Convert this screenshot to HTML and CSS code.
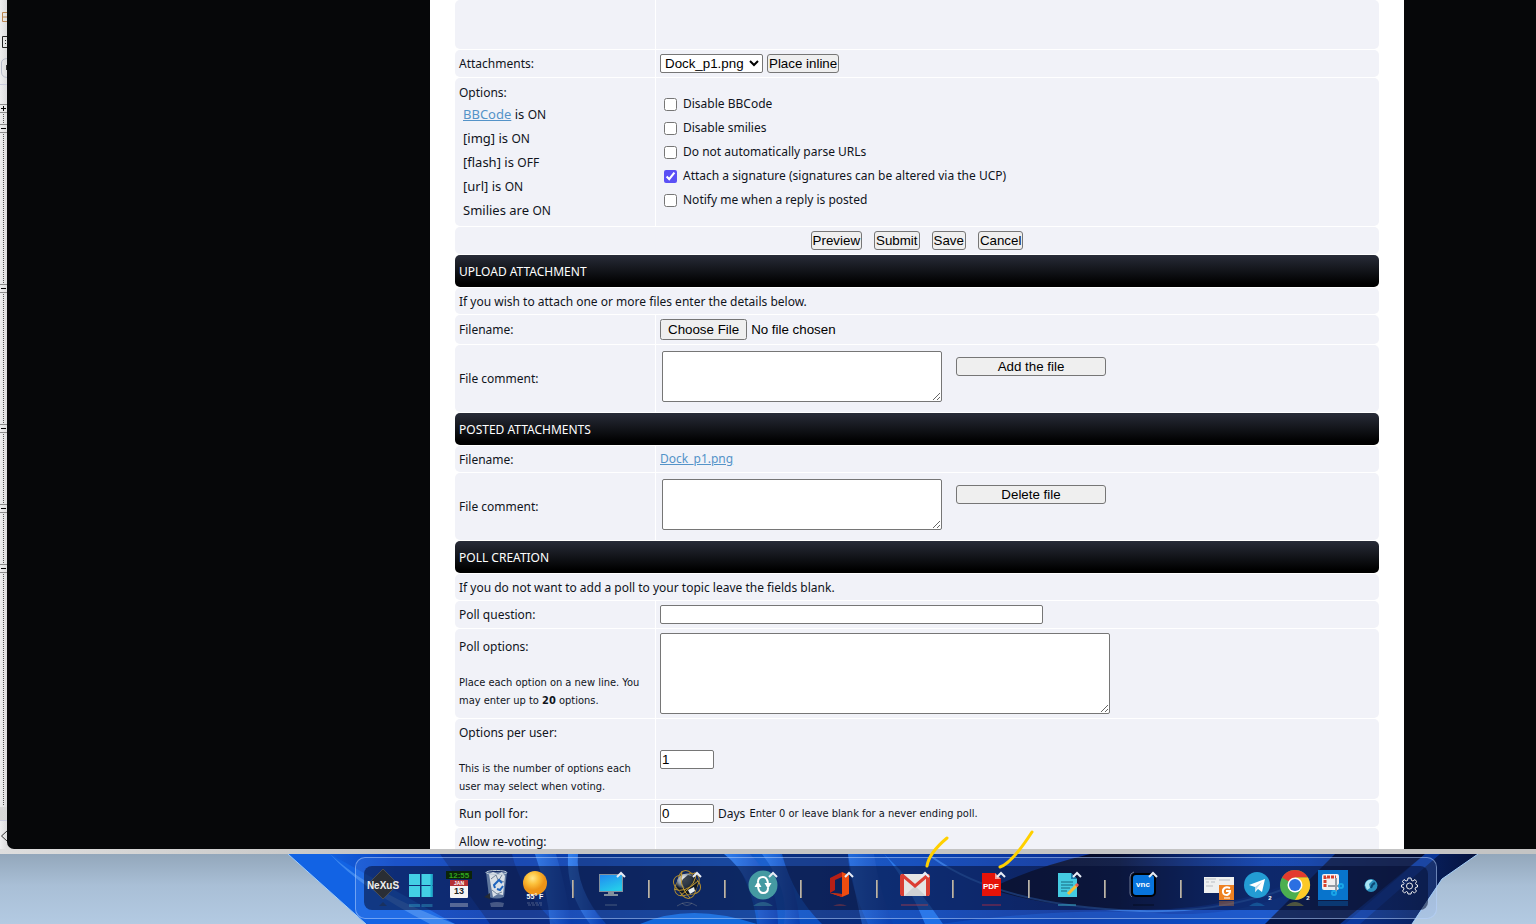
FILE: index.html
```
<!DOCTYPE html>
<html lang="en">
<head>
    <meta charset="UTF-8">
    <meta name="viewport" content="width=device-width, initial-scale=1.0">
    <title>Post a reply</title>
    <link rel="stylesheet" href="styles.css">
</head>
<body>
    <div class="windows">
        <aside class="tree">
            <svg viewBox="0 0 7 854" width="7" height="854" aria-hidden="true">
                <path d="M7 12.500H2.500V21.500H7M3 17H7" fill="none" stroke="#b98550"/>
                <path d="M7 36.500H2.500V47.500H7" fill="none" stroke="#222"/>
                <path d="M5 40h1v1H5zM5 43h1v1H5z" fill="#222"/>
                <path d="M7 58.500Q1.500 59 1.500 63V72Q1.500 77 7 77.500" fill="none" stroke="#b9bccb"/>
                <path d="M6 65h1v5H6z" fill="#333"/>
                <path d="M0 84.500H7M0 820.500H7" stroke="#c9cbdc"/>
                <path d="M3.500 114V124M3.500 134V284M3.500 294V424M3.500 434V504M3.500 514V564M3.500 574V806" stroke="#555" stroke-dasharray="1 1"/>
                <path d="M0 104.500H7M0 112.500H7M0 124.500H7M0 132.500H7M0 284.500H7M0 292.500H7M0 424.500H7M0 432.500H7M0 504.500H7M0 512.500H7M0 564.500H7M0 572.500H7" stroke="#888"/>
                <path d="M1 108.500H6M3.500 106V111M1 128.500H6M1 288.500H6M1 428.500H6M1 508.500H6M1 568.500H6" stroke="#000"/>
                <path d="M0 807H7V820H0z" fill="#d8d8d8"/>
                <path d="M7 831L1.500 836L7 841" fill="none" stroke="#333"/>
            </svg>
        </aside>
        <main class="browser">
            <form class="page" onsubmit="return false">
                <div class="row top"><div></div><div></div></div>
                <div class="row">
                    <div><label for="attach">Attachments:</label></div>
                    <div class="inline">
                        <select id="attach"><option>Dock_p1.png</option></select>
                        <button type="button">Place inline</button>
                    </div>
                </div>
                <div class="row options">
                    <div>
                        Options:
                        <ul>
                            <li><a href="#">BBCode</a> is <small>ON</small></li>
                            <li>[img] is <small>ON</small></li>
                            <li>[flash] is <small>OFF</small></li>
                            <li>[url] is <small>ON</small></li>
                            <li>Smilies are <small>ON</small></li>
                        </ul>
                    </div>
                    <div class="checks">
                        <label><input type="checkbox">Disable BBCode</label>
                        <label><input type="checkbox">Disable smilies</label>
                        <label><input type="checkbox">Do not automatically parse URLs</label>
                        <label><input type="checkbox" checked>Attach a signature (signatures can be altered via the UCP)</label>
                        <label><input type="checkbox">Notify me when a reply is posted</label>
                    </div>
                </div>
                <div class="buttons">
                    <button type="button">Preview</button>
                    <button type="submit">Submit</button>
                    <button type="button">Save</button>
                    <button type="button">Cancel</button>
                </div>

                <h2>UPLOAD ATTACHMENT</h2>
                <p class="note">If you wish to attach one or more files enter the details below.</p>
                <div class="row file">
                    <div><label for="upload">Filename:</label></div>
                    <div><input type="file" id="upload"></div>
                </div>
                <div class="row comment">
                    <div><label for="comment1">File comment:</label></div>
                    <div>
                        <textarea id="comment1"></textarea>
                        <button type="button" class="wide">Add the file</button>
                    </div>
                </div>

                <h2>POSTED ATTACHMENTS</h2>
                <div class="row short">
                    <div>Filename:</div>
                    <div><a href="#">Dock_p1.png</a></div>
                </div>
                <div class="row comment">
                    <div><label for="comment2">File comment:</label></div>
                    <div>
                        <textarea id="comment2"></textarea>
                        <button type="button" class="wide">Delete file</button>
                    </div>
                </div>

                <h2>POLL CREATION</h2>
                <p class="note">If you do not want to add a poll to your topic leave the fields blank.</p>
                <div class="row">
                    <div><label for="question">Poll question:</label></div>
                    <div><input type="text" id="question" class="question"></div>
                </div>
                <div class="row poll">
                    <div>
                        <label for="polloptions">Poll options:</label>
                        <p class="hint">Place each option on a new line. You may enter up to <b>20</b> options.</p>
                    </div>
                    <div><textarea id="polloptions" class="polltext"></textarea></div>
                </div>
                <div class="row peruser">
                    <div>
                        <label for="maxoptions">Options per user:</label>
                        <p class="hint">This is the number of options each user may select when voting.</p>
                    </div>
                    <div><input type="text" id="maxoptions" class="number" value="1"></div>
                </div>
                <div class="row">
                    <div><label for="days">Run poll for:</label></div>
                    <div class="inline"><input type="text" id="days" class="number" value="0"> Days <span class="hint">Enter 0 or leave blank for a never ending poll.</span></div>
                </div>
                <div class="row">
                    <div>Allow re-voting:</div>
                    <div></div>
                </div>
            </form>
        </main>
    </div>

    <footer class="desktop">
        <svg class="wallpaper" viewBox="0 0 1536 70" preserveAspectRatio="none" aria-hidden="true">
            <defs>
                <linearGradient id="sky" x1="0" y1="0" x2="0" y2="1"><stop offset="0" stop-color="#93a7bb"/><stop offset=".45" stop-color="#a9bfd6"/><stop offset="1" stop-color="#b3cae2"/></linearGradient>
                <linearGradient id="bloom" x1="0" x2="1"><stop offset="0" stop-color="#1a72ec"/><stop offset=".09" stop-color="#0b45c4"/><stop offset=".2" stop-color="#0a3aa8"/><stop offset=".4" stop-color="#0b55c8"/><stop offset=".53" stop-color="#0842b4"/><stop offset=".66" stop-color="#0a2f94"/><stop offset=".82" stop-color="#0a43bb"/><stop offset="1" stop-color="#06133e"/></linearGradient>
                <linearGradient id="streak" x1="0" y1="0" x2="1" y2="0"><stop offset="0" stop-color="#2f7ff0"/><stop offset="1" stop-color="#0a3cae"/></linearGradient>
                <linearGradient id="shade" x1="0" y1="0" x2="1" y2="0"><stop offset="0" stop-color="#02041a"/><stop offset=".4" stop-color="#030722" stop-opacity=".9"/><stop offset="1" stop-color="#06206c" stop-opacity="0"/></linearGradient>
            </defs>
            <rect width="1536" height="70" fill="url(#sky)"/>
            <path d="M288 0H1478L1442 25L1427 47L1412 70H366Z" fill="url(#bloom)"/>
            <path d="M288 0H330L455 70H366Z" fill="#1263e4"/>
            <path d="M330 0Q370 38 455 70H430Q360 34 330 0Z" fill="#58a0f6" opacity=".6"/>
            <path d="M440 0L490 70H556Q520 36 512 0Z" fill="#081b62" opacity=".5"/>
            <path d="M535 0Q548 38 550 70H572Q565 30 556 0Z" fill="url(#streak)" opacity=".8"/>
            <path d="M578 0Q575 32 604 70H590Q566 40 568 0Z" fill="url(#streak)"/>
            <path d="M578 0H730Q752 30 757 70H606Q575 35 578 0Z" fill="#06205f" opacity=".5"/>
            <path d="M640 70Q690 48 757 70Z" fill="#1477f0" opacity=".8"/>
            <path d="M724 0Q753 22 760 70H778Q778 28 750 0Z" fill="url(#streak)"/>
            <path d="M762 0Q790 36 784 70H800Q796 30 780 0Z" fill="url(#streak)" opacity=".8"/>
            <path d="M782 0Q793 42 822 70H868Q849 30 848 0Z" fill="#071550" opacity=".6"/>
            <path d="M848 0Q855 40 862 70H893Q879 36 874 0Z" fill="url(#streak)" opacity=".6"/>
            <path d="M884 0Q918 32 943 70H925Q908 28 884 0Z" fill="#2784ff" opacity=".7"/>
            <path d="M1090 0Q1025 16 990 35Q1070 60 1170 55Q1250 50 1310 20V0Z" fill="url(#shade)"/>
            <path d="M932 3Q1000 52 1140 57Q1230 60 1310 25" fill="none" stroke="#3a86ee" stroke-width="2" opacity=".7"/>
            <path d="M940 70Q1070 52 1170 60Q1250 62 1310 30V70Z" fill="#125ad8" opacity=".45"/>
            <path d="M1335 0H1425L1340 70H1265Z" fill="#050a29" opacity=".8"/>
            <path d="M1425 0H1440L1360 70H1345Z" fill="#0b3ca5" opacity=".8"/>
            <path d="M288 0L366 70M1478 0L1442 25L1412 70" fill="none" stroke="#a5d0fa"/>
        </svg>
        <nav class="dock">
            <div class="shelf">
                <button type="button" aria-label="Nexus"><svg viewBox="0 0 38 44">
                    <path d="M19 3L34 18L19 33L4 18Z" fill="#2a2e35" stroke="#484c53"/>
                    <text x="19" y="23" text-anchor="middle" class="nexus">NeXuS</text>
                    <path d="M15 40L19 36L23 40Z" fill="#222a3c" opacity=".5"/>
                </svg></button>
                <button type="button" aria-label="Start"><svg viewBox="0 0 38 44">
                    <path d="M7 8H18V19H7zM19.500 8H30.500V19H19.500zM7 20H18V31H7zM19.500 20H30.500V31H19.500z" fill="#43cfe5"/>
                    <path d="M28.500 8h2v23h-2z" fill="#1eafcd"/>
                    <path d="M7 38H18V41H7zM19.500 38H30.500V41H19.500z" fill="#43cfe5" opacity=".3"/>
                </svg></button>
                <button type="button" aria-label="Calendar"><svg viewBox="0 0 38 44">
                    <rect x="6" y="5" width="26" height="8" fill="#0b2408"/>
                    <text x="19" y="12" text-anchor="middle" class="clock">12:55</text>
                    <rect x="10" y="14" width="18" height="18" rx="1" fill="#f4f4f4"/>
                    <rect x="10" y="14" width="18" height="6" fill="#b32f33"/>
                    <text x="19" y="19" text-anchor="middle" class="month">JAN</text>
                    <text x="19" y="28" text-anchor="middle" class="day">13</text>
                    <rect x="10" y="37" width="18" height="4" fill="#ddd" opacity=".35"/>
                </svg></button>
                <button type="button" aria-label="Recycle Bin"><svg viewBox="0 0 38 44">
                    <path d="M8 6L11 31Q19 34 26 31L29 6Z" fill="#8ca5bf" opacity=".65"/>
                    <path d="M11 8L15 6L20 8L24 6L27 10L25 29L20 28L15 31L13 20Z" fill="#eef2f5" opacity=".85"/>
                    <ellipse cx="18.500" cy="6.500" rx="10.500" ry="2" fill="none" stroke="#bdcbd8"/>
                    <path d="M13 13L18 9L20 14M24 9L21 14L26 16M14 24L19 28L24 26" fill="none" stroke="#71849a"/>
                    <path d="M18 17L21 14L24 17M25 20L22 24L19 23M17 22L16 19L18 17" fill="none" stroke="#1d63bd" stroke-width="2"/>
                    <path d="M6 31L12 27V33Z" fill="#252b35"/>
                    <path d="M12 37Q19 35 26 37L25 41H13Z" fill="#cbd4df" opacity=".3"/>
                </svg></button>
                <button type="button" aria-label="Weather"><svg viewBox="0 0 38 44">
                    <defs><radialGradient id="sun" cx=".4" cy=".3"><stop offset="0" stop-color="#ffe88c"/><stop offset=".5" stop-color="#fcc13c"/><stop offset="1" stop-color="#ee9417"/></radialGradient></defs>
                    <circle cx="19" cy="17" r="12" fill="url(#sun)"/>
                    <text x="19" y="33" text-anchor="middle" class="temp">55° F</text>
                    <path d="M11 37H27M12 39H26" stroke="#d5dae2" opacity=".3" stroke-dasharray="3 1"/>
                </svg></button>
                <i></i>
                <button type="button" aria-label="Computer"><svg viewBox="0 0 38 44">
                    <defs><linearGradient id="screen" x2=".5" y2="1"><stop offset="0" stop-color="#2187f2"/><stop offset="1" stop-color="#25cbea"/></linearGradient></defs>
                    <rect x="7.500" y="8.500" width="23" height="17" fill="url(#screen)" stroke="#83919e"/>
                    <path d="M16 26H22V28H26V30H12V28H16Z" fill="#83919e"/>
                    <path d="M13 39H25" stroke="#83919e" opacity=".5"/>
                    <path d="M25 11L29 7L33 11" class="caret"/>
                </svg></button>
                <i></i>
                <button type="button" aria-label="Network"><svg viewBox="0 0 38 44">
                    <defs><radialGradient id="ball" cx=".35" cy=".25"><stop offset="0" stop-color="#f5f5f5"/><stop offset=".6" stop-color="#8a96a5"/><stop offset="1" stop-color="#101722"/></radialGradient></defs>
                    <g fill="none" stroke="#b08c2e">
                        <ellipse cx="19" cy="18.500" rx="14" ry="9" transform="rotate(20 19 18.500)"/>
                        <ellipse cx="19" cy="18.500" rx="14" ry="9" transform="rotate(80 19 18.500)"/>
                        <ellipse cx="19" cy="18.500" rx="14" ry="9" transform="rotate(140 19 18.500)"/>
                    </g>
                    <circle cx="19" cy="18" r="10.500" fill="url(#ball)"/>
                    <path d="M15 13L20 9L26 11L29 17L24 21L17 22L13 17Z" fill="#1f2835" opacity=".85"/>
                    <path d="M20 24L26 21L27 25L22 28Z" fill="#e8edf0"/>
                    <path d="M6 23Q16 28 30 15M14 5Q10 20 22 32M27 6Q31 16 12 30" fill="none" stroke="#c39a31"/>
                    <path d="M9 40Q19 33 29 40M14 37Q19 42 24 37" fill="none" stroke="#8c8f92" opacity=".4"/>
                    <path d="M25 11L29 7L33 11" class="caret"/>
                </svg></button>
                <i></i>
                <button type="button" aria-label="Sync"><svg viewBox="0 0 38 44">
                    <circle cx="19" cy="19" r="14.500" fill="#459aa2"/>
                    <path d="M14 16Q14 11 19 11Q23 11 24 17M24 22Q24 27 19 27Q15 27 14 21" fill="none" stroke="#fff" stroke-width="2"/>
                    <path d="M10.500 21L14 15L17.500 21ZM20.500 17H27.500L24 23Z" fill="#fff"/>
                    <path d="M9 40Q19 32 29 40Z" fill="#459aa2" opacity=".4"/>
                    <path d="M25 11L29 7L33 11" class="caret"/>
                </svg></button>
                <i></i>
                <button type="button" aria-label="Office"><svg viewBox="0 0 38 44">
                    <path d="M10 12L22 6V11L15 14V24L10 27Z" fill="#b71f16"/>
                    <path d="M22 6L29 9V28L22 31L10 27L22 28Z" fill="#ee4c10"/>
                    <path d="M10 27L22 28V31Z" fill="#c32a13"/>
                    <path d="M13 40Q20 36 27 40Z" fill="#b33d35" opacity=".4"/>
                    <path d="M25 11L29 7L33 11" class="caret"/>
                </svg></button>
                <i></i>
                <button type="button" aria-label="Gmail"><svg viewBox="0 0 38 44">
                    <path d="M5 8H33V30H5Z" fill="#e4e5e5"/>
                    <path d="M8 30L19 20L30 30Z" fill="#cfd2d4"/>
                    <path d="M4 10Q4 8 6 8H8V30H6Q4 30 4 28ZM30 8H32Q34 8 34 10V28Q34 30 32 30H30Z" fill="#d93d32"/>
                    <path d="M6 9L19 20L32 9" fill="none" stroke="#dc3e34" stroke-width="3"/>
                    <path d="M5 39H32" stroke="#b33d48" stroke-width="2" opacity=".4"/>
                    <path d="M25 11L29 7L33 11" class="caret"/>
                </svg></button>
                <i></i>
                <button type="button" aria-label="PDF"><svg viewBox="0 0 38 44">
                    <path d="M10 7H23L29 13V30H10Z" fill="#e51309"/><path d="M23 7L29 13H23Z" fill="#f59c96"/>
                    <text x="19" y="23" text-anchor="middle" class="pdf">PDF</text>
                    <path d="M10 39H29" stroke="#d62b35" stroke-width="2" opacity=".35"/>
                    <path d="M25 11L29 7L33 11" class="caret"/>
                </svg></button>
                <i></i>
                <button type="button" aria-label="Notes"><svg viewBox="0 0 38 44">
                    <path d="M10 7H23L29 13V31H10Z" fill="#44cbe2"/><path d="M23 7L29 13H23Z" fill="#1a7baa"/>
                    <path d="M13 16H25M13 19H25M13 22H22M13 25H19" stroke="#17677e"/>
                    <path d="M20 28L29 19" stroke="#f3bd37" stroke-width="3"/><path d="M28 20L30 18" stroke="#e25959" stroke-width="3"/>
                    <path d="M10 39H28" stroke="#44cbe2" stroke-width="2" opacity=".4"/>
                    <path d="M25 11L29 7L33 11" class="caret"/>
                </svg></button>
                <i></i>
                <button type="button" aria-label="VNC"><svg viewBox="0 0 38 44">
                    <rect x="8" y="8" width="23" height="22" rx="4" fill="#0874dc" stroke="#000" stroke-width="2"/>
                    <path d="M8 31Q6 30 6 27V11Q6 7 10 6" fill="none" stroke="#6d7792"/>
                    <text x="19" y="21" text-anchor="middle" class="vnc">vnc</text>
                    <path d="M9 39H30" stroke="#000" opacity=".5"/>
                    <path d="M25 11L29 7L33 11" class="caret"/>
                </svg></button>
                <i></i>
                <button type="button" aria-label="PDF editor"><svg viewBox="0 0 38 44">
                    <rect x="4" y="11" width="30" height="16" fill="#eef0f0"/>
                    <path d="M5 13H16M6 16H9M11 16H15M6 20H13M19 14H30" stroke="#b8bdc3"/>
                    <rect x="19" y="19" width="15" height="15" fill="#ee8122"/>
                    <path d="M30 22Q25 20 23 24Q22 29 27 29Q30 28 30 25H26" fill="none" stroke="#fff" stroke-width="2"/>
                    <path d="M24 32H30" stroke="#fff"/>
                    <rect x="19" y="35" width="15" height="5" fill="#ee8122" opacity=".35"/>
                </svg></button>
                <button type="button" aria-label="Telegram"><svg viewBox="0 0 38 44">
                    <circle cx="19" cy="19" r="13" fill="#239cd4"/>
                    <path d="M11 19L27 13L24 26L20 23L17 26V21Z" fill="#fff"/><path d="M17 21L24 16L19 22L17 26Z" fill="#b9d8ea"/>
                    <text x="32" y="34" text-anchor="middle" class="count">2</text>
                    <path d="M11 40Q19 33 27 40Z" fill="#239cd4" opacity=".35"/>
                </svg></button>
                <button type="button" aria-label="Chrome"><svg viewBox="0 0 38 44">
                    <circle cx="19" cy="19" r="15" fill="#4caf50"/>
                    <path d="M19 19L6 11.500A15 15 0 0 1 32 11.500H19Z" fill="#e33b2e"/>
                    <path d="M19 11.500H32A15 15 0 0 1 19 34L25.500 22.500Z" fill="#fcc928"/>
                    <circle cx="19" cy="19" r="7.500" fill="#fff"/><circle cx="19" cy="19" r="6" fill="#2b6fe2"/>
                    <text x="32" y="34" text-anchor="middle" class="count">2</text>
                    <path d="M10 40Q19 32 28 40Z" fill="#9f9c38" opacity=".45"/>
                </svg></button>
                <button type="button" aria-label="Snipping tool"><svg viewBox="0 0 38 44">
                    <rect x="4" y="4" width="30" height="30" fill="#0874cc"/>
                    <rect x="8" y="8" width="17" height="16" rx="2" fill="#f0f0f0"/>
                    <path d="M11 21V11H22" fill="none" stroke="#d73f2b" stroke-width="3" stroke-dasharray="3 1"/>
                    <path d="M14 20H26M22 12V26" stroke="#929aa2" stroke-width="2"/>
                    <circle cx="27" cy="20" r="2" fill="none" stroke="#19a6e8" stroke-width="2"/><circle cx="20" cy="27" r="2" fill="none" stroke="#19a6e8" stroke-width="2"/>
                    <rect x="4" y="35" width="30" height="5" fill="#0874cc" opacity=".35"/>
                </svg></button>
                <button type="button" aria-label="Browser"><svg viewBox="0 0 38 44">
                    <circle cx="19" cy="19.500" r="6.500" fill="#2c91bf"/>
                    <path d="M13 19Q14 13 21 14L17 18L18 22L15 24Z" fill="#a9e4f4"/>
                    <path d="M19 22Q20 18 23 17" fill="none" stroke="#0c4875" stroke-width="2"/>
                </svg></button>
                <button type="button" aria-label="Settings"><svg viewBox="0 0 38 44">
                    <g fill="none" stroke="#eee">
                        <path d="M18 12H21L21.500 14.500L23 15L25 13.500L26.500 15.500L25.500 17.500L26 18.500L27.500 19V21L25.500 21.500L25 23L26.500 25L24.500 27L22.500 25.500L21.500 26L21 28H18L17.500 26L16.500 25.500L14.500 27L12.500 25L14 23L13.500 21.500L11.500 21V19L13.500 18.500L14 17.500L12.500 15.500L14 13.500L16 15L17.500 14.500Z"/>
                        <circle cx="19.500" cy="20" r="3"/>
                    </g>
                </svg></button>
            </div>
        </nav>
    </footer>

    <!-- pen marks drawn over the screen -->
    <svg class="marks" viewBox="0 0 110 40" width="110" height="40" aria-hidden="true">
        <path d="M27 9Q9 24 7 37M112 3Q92 34 80 38" fill="none" stroke="#ffd000" stroke-width="3" stroke-linecap="round"/>
    </svg>
</body>
</html>
```

FILE: styles.css
```
* {
    box-sizing: border-box;
}
body {
    display: flex;
    flex-direction: column;
    height: 100vh;
    margin: 0;
    overflow: hidden;
    background: #a9bfd6;
    font-family: "Noto Sans", Tahoma, sans-serif;
    font-size: 12px;
    line-height: 18px;
    color: #10141c;
}
.windows {
    display: flex;
    flex: 1;
    min-height: 0;
    padding-bottom: 5px;
    background: linear-gradient(to right, #dedede, #c4c4c4 25%);
}
.tree {
    width: 7px;
    background: linear-gradient(to right, #eeeeef, #dcdcdd);
}
.tree svg {
    display: block;
}
.browser {
    flex: 1;
    display: flex;
    padding: 0 132px 0 423px;
    background: #060709;
    border-bottom-left-radius: 7px;
    overflow: hidden;
}
.page {
    flex: 1;
    padding: 0 25px;
    background: #fff;
}
.row {
    display: grid;
    grid-template-columns: 200px 1fr;
    gap: 1px;
    min-height: 27px;
    margin-bottom: 1px;
}
.row > div {
    display: flex;
    flex-direction: column;
    align-items: flex-start;
    justify-content: center;
    padding: 0 4px;
    background: #f1f2f8;
}
.row > div:first-child {
    padding-top: 1px;
    border-radius: 5px 0 0 5px;
}
.row > div:last-child {
    border-radius: 0 5px 5px 0;
}
.row > .inline {
    flex-direction: row;
    align-items: center;
    justify-content: flex-start;
    gap: 4px;
}
.top {
    min-height: 49px;
}
a {
    color: #5493c8;
}
button, select, input, textarea {
    font-family: "Liberation Sans", Arial, sans-serif;
    color: #000;
}
.page button, select {
    height: 19px;
    padding: 0 1px;
    line-height: 15px;
    background: #efefef;
    border: 1px solid #767676;
    border-radius: 3px;
}
.page select {
    width: 103px;
    padding: 0;
    background: #fff;
    border-radius: 2px;
}
input[type="text"] {
    height: 19px;
    padding: 1px;
    border: 1px solid #767676;
    border-radius: 2px;
}
textarea {
    border: 1px solid #767676;
    border-radius: 2px;
}
.options {
    min-height: 148px;
}
.options ul {
    list-style: none;
    margin: 0;
    padding: 0 4px;
    font-size: 13px;
    line-height: 24px;
}
.options small {
    font-size: 12px;
    line-height: 1;
}
.row > .checks {
    padding: 0 8px;
}
.checks label {
    display: flex;
    align-items: center;
    gap: 6px;
    height: 24px;
}
.checks input {
    width: 13px;
    height: 13px;
    margin: 0;
    accent-color: #5b50f5;
}
.buttons {
    display: flex;
    align-items: center;
    justify-content: center;
    gap: 12px;
    height: 27px;
    margin-bottom: 1px;
    border-radius: 5px;
    background: #f1f2f8;
}
h2 {
    margin: 0 0 1px;
    padding: 1px 4px 0;
    font-size: 12px;
    font-weight: normal;
    line-height: 31px;
    color: #fff;
    background: linear-gradient(#282c38, #000 90%);
    border-radius: 5px;
}
.note {
    margin: 0 0 1px;
    padding: 5px 4px 3px;
    border-radius: 5px;
    background: #f1f2f8;
}
.file {
    min-height: 29px;
}
.short {
    min-height: 26px;
}
.comment {
    min-height: 67px;
}
.row.comment > div:last-child {
    flex-direction: row;
    align-items: flex-start;
    justify-content: flex-start;
    gap: 14px;
    padding: 6px;
}
.comment textarea {
    width: 280px;
    height: 51px;
}
.page .wide {
    width: 150px;
    margin-top: 6px;
}
.question {
    width: 383px;
}
.poll {
    min-height: 89px;
}
.peruser {
    min-height: 80px;
}
.polltext {
    width: 450px;
    height: 81px;
}
.number {
    width: 54px;
}
.hint {
    margin: 0;
    font-family: "DejaVu Sans Condensed", Tahoma, sans-serif;
    font-size: 11px;
}
p.hint {
    padding-top: 18px;
}
.desktop {
    position: relative;
    height: 70px;
    padding: 3px 0 0 355px;
}
.wallpaper {
    position: absolute;
    inset: 0;
    width: 100%;
    height: 100%;
}
.dock {
    position: relative;
    width: fit-content;
    padding: 8px;
    background: rgba(130, 170, 240, 0.15);
    border: 1px solid rgba(190, 215, 255, 0.5);
    border-radius: 10px;
}
.shelf {
    display: flex;
    height: 44px;
    border-radius: 8px;
    background: rgba(3, 12, 50, 0.55);
}
.shelf button {
    width: 38px;
    height: 44px;
    padding: 0;
    border: 0;
    background: none;
}
.shelf svg {
    display: block;
    width: 38px;
    height: 44px;
    overflow: visible;
}
.shelf i {
    width: 2px;
    height: 18px;
    margin: 14px 18px 0;
    background: linear-gradient(to right, #d0ccc4, #77716a);
}
.shelf text {
    font-family: "Liberation Sans", Arial, sans-serif;
    font-weight: bold;
    fill: #fff;
}
.shelf .nexus {
    font-size: 10px;
    fill: #eee;
}
.shelf .clock {
    font-size: 8px;
    fill: #2fa51f;
}
.shelf .month {
    font-size: 5px;
}
.shelf .day {
    font-size: 9px;
    fill: #222;
}
.shelf .temp {
    font-size: 7px;
}
.shelf .pdf {
    font-size: 8px;
}
.shelf .vnc {
    font-size: 8px;
}
.shelf .count {
    font-size: 6px;
}
.caret {
    fill: none;
    stroke: #e8edf6;
    stroke-width: 2;
}
.marks {
    position: absolute;
    left: 920px;
    bottom: 55px;
    overflow: visible;
}
```
